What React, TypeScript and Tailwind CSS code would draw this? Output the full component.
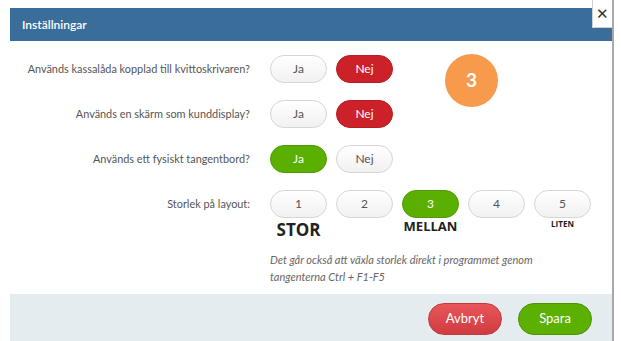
import React from "react";

const Pill = ({
  label,
  tone = "plain",
  className = "",
}: {
  label: string;
  tone?: "plain" | "red" | "green";
  className?: string;
}) => {
  const toneCls =
    tone === "red"
      ? "bg-[#cc2128] border-[#b81d24] text-white"
      : tone === "green"
        ? "bg-[#5aaf00] border-[#4f9c00] text-white"
        : "bg-gradient-to-b from-white to-[#f1f1f1] border-[#d6d6d6] text-[#555]";
  return (
    <button
      className={`flex h-[28px] w-[57px] items-center justify-center rounded-full border text-[12px] ${toneCls} ${className}`}
    >
      {label}
    </button>
  );
};

const questions = [
  { q: "Används kassalåda kopplad till kvittoskrivaren?", yes: false },
  { q: "Används en skärm som kunddisplay?", yes: false },
  { q: "Används ett fysiskt tangentbord?", yes: true },
];

const sizes = [
  { n: "1", tag: "STOR", cls: "text-[17px] leading-[22px] mt-[1px]" },
  { n: "2", tag: "", cls: "" },
  { n: "3", tag: "MELLAN", cls: "text-[13px] leading-[16px]" },
  { n: "4", tag: "", cls: "" },
  { n: "5", tag: "LITEN", cls: "text-[8px] leading-[10px] mt-[1px]" },
];

export default function App() {
  return (
    <div className="flex h-[341px] w-[621px] overflow-hidden bg-white font-['Lato',sans-serif]">
      <div className="relative w-[612px] pl-[10px] pt-[8px]">
        {/* header */}
        <div className="flex h-[33px] items-center bg-[#3b6d9a] pl-[12px] text-[12px] font-semibold text-white">
          Inställningar
        </div>
        <button className="absolute right-0 top-0 flex h-[28px] w-[20px] items-center justify-center border-b border-l border-[#cfcfcf] bg-white text-[15px] leading-none text-[#333]">
          ✕
        </button>

        {/* body */}
        <div className="relative h-[253px] bg-white pt-[14px]">
          <div className="absolute left-[435px] top-[13px] flex h-[53px] w-[53px] items-center justify-center rounded-full bg-[#f79a4b] text-[19px] font-bold text-white">
            3
          </div>

          <div className="grid grid-cols-[240px_1fr] gap-x-[20px] gap-y-[17px]">
            {questions.map((r) => (
              <React.Fragment key={r.q}>
                <div className="flex h-[28px] items-center justify-end whitespace-nowrap text-[10.9px] text-[#555]">
                  {r.q}
                </div>
                <div className="flex gap-[9px]">
                  <Pill label="Ja" tone={r.yes ? "green" : "plain"} />
                  <Pill label="Nej" tone={r.yes ? "plain" : "red"} />
                </div>
              </React.Fragment>
            ))}
            <div className="flex h-[28px] items-center justify-end whitespace-nowrap text-[10.9px] text-[#555]">
              Storlek på layout:
            </div>
            <div className="flex flex-col">
              <div className="flex gap-[9px]">
                {sizes.map((s) => (
                  <div key={s.n} className="flex w-[57px] flex-col items-center">
                    <Pill label={s.n} tone={s.n === "3" ? "green" : "plain"} />
                    {s.tag && (
                      <span className={`font-['Open_Sans',sans-serif] font-bold text-[#222] ${s.cls}`}>
                        {s.tag}
                      </span>
                    )}
                  </div>
                ))}
              </div>
              <p className="mt-[10px] w-[300px] text-[11px] leading-[17px] italic text-[#666]">
                Det går också att växla storlek direkt i programmet genom tangenterna Ctrl + F1-F5
              </p>
            </div>
          </div>
        </div>

        {/* footer */}
        <div className="flex h-[60px] items-start justify-end gap-[16px] bg-[#e5ecef] pr-[20px] pt-[9px]">
          <button className="h-[32px] w-[74px] rounded-full border border-[#c23a3d] bg-gradient-to-b from-[#e9565a] to-[#cf3c40] text-[13px] text-white">
            Avbryt
          </button>
          <button className="h-[32px] w-[74px] rounded-full border border-[#4a9600] bg-[#5bb000] text-[13px] text-white">
            Spara
          </button>
        </div>
      </div>
      <div className="h-[341px] w-[2px] bg-[#a9a9a9]" />
    </div>
  );
}
